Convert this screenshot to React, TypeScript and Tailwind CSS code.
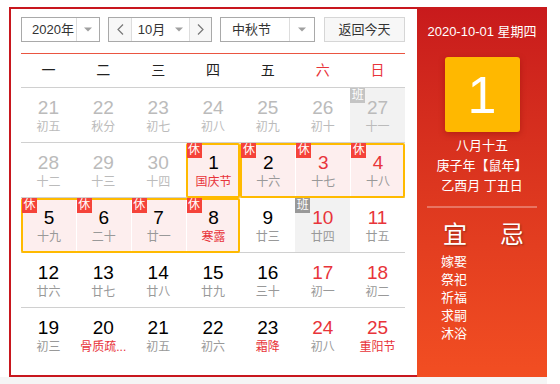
type Cell = {
  d: number
  l: string
  out?: boolean
  red?: boolean
  lred?: boolean
  tag?: '休' | '班'
  bg?: 'pink' | 'gray'
}

type Box = { col: number; span: number }

const colStart = ['col-start-1', 'col-start-2', 'col-start-3', 'col-start-4', 'col-start-5', 'col-start-6', 'col-start-7']
const colSpan = ['', 'col-span-1', 'col-span-2', 'col-span-3', 'col-span-4']

const weeks: { cells: Cell[]; boxes: Box[] }[] = [
  {
    cells: [
      { d: 21, l: '初五', out: true },
      { d: 22, l: '秋分', out: true },
      { d: 23, l: '初七', out: true },
      { d: 24, l: '初八', out: true },
      { d: 25, l: '初九', out: true },
      { d: 26, l: '初十', out: true },
      { d: 27, l: '十一', out: true, tag: '班', bg: 'gray' },
    ],
    boxes: [],
  },
  {
    cells: [
      { d: 28, l: '十二', out: true },
      { d: 29, l: '十三', out: true },
      { d: 30, l: '十四', out: true },
      { d: 1, l: '国庆节', lred: true, tag: '休', bg: 'pink' },
      { d: 2, l: '十六', tag: '休', bg: 'pink' },
      { d: 3, l: '十七', red: true, tag: '休', bg: 'pink' },
      { d: 4, l: '十八', red: true, tag: '休', bg: 'pink' },
    ],
    boxes: [
      { col: 3, span: 1 },
      { col: 4, span: 3 },
    ],
  },
  {
    cells: [
      { d: 5, l: '十九', tag: '休', bg: 'pink' },
      { d: 6, l: '二十', tag: '休', bg: 'pink' },
      { d: 7, l: '廿一', tag: '休', bg: 'pink' },
      { d: 8, l: '寒露', lred: true, tag: '休', bg: 'pink' },
      { d: 9, l: '廿三' },
      { d: 10, l: '廿四', red: true, tag: '班', bg: 'gray' },
      { d: 11, l: '廿五', red: true },
    ],
    boxes: [{ col: 0, span: 4 }],
  },
  {
    cells: [
      { d: 12, l: '廿六' },
      { d: 13, l: '廿七' },
      { d: 14, l: '廿八' },
      { d: 15, l: '廿九' },
      { d: 16, l: '三十' },
      { d: 17, l: '初一', red: true },
      { d: 18, l: '初二', red: true },
    ],
    boxes: [],
  },
  {
    cells: [
      { d: 19, l: '初三' },
      { d: 20, l: '骨质疏...', lred: true },
      { d: 21, l: '初五' },
      { d: 22, l: '初六' },
      { d: 23, l: '霜降', lred: true },
      { d: 24, l: '初八', red: true },
      { d: 25, l: '重阳节', red: true, lred: true },
    ],
    boxes: [],
  },
]

const weekdays = ['一', '二', '三', '四', '五', '六', '日']

function Caret() {
  return (
    <svg width="8" height="5" viewBox="0 0 8 5">
      <path d="M0 0.5h8L4 4.5z" fill="#a0a0a0" />
    </svg>
  )
}

function Chevron({ dir }: { dir: 'l' | 'r' }) {
  return (
    <svg width="7" height="11" viewBox="0 0 7 11">
      <polyline
        points={dir === 'l' ? '6,0.5 1,5.5 6,10.5' : '1,0.5 6,5.5 1,10.5'}
        fill="none"
        stroke="#777"
        strokeWidth="1.2"
      />
    </svg>
  )
}

function DayCell({ c, col }: { c: Cell; col: number }) {
  const bg =
    c.bg === 'pink' ? 'bg-[#fdeeee] border-l border-white' : c.bg === 'gray' ? 'bg-[#f2f2f2]' : ''
  const num = c.out ? 'text-[#bbbbbb]' : c.red ? 'text-[#e8343a]' : 'text-black'
  const lun = c.out ? 'text-[#bbbbbb]' : c.lred ? 'text-[#e8343a]' : 'text-[#999999]'
  const tagBg = c.tag === '休' ? 'bg-[#f5433a]' : c.out ? 'bg-[#c4c4c4]' : 'bg-[#999999]'
  return (
    <div className={`${colStart[col]} row-start-1 relative min-w-0 pt-[9px] text-center ${bg}`}>
      {c.tag && (
        <span
          className={`absolute left-0 top-0 z-10 w-[15px] h-[15px] text-[12px] leading-[15px] text-white text-center ${tagBg}`}
        >
          {c.tag}
        </span>
      )}
      <div className={`text-[19px] leading-[22px] ${num}`}>{c.d}</div>
      <div className={`text-[12px] leading-[16px] whitespace-nowrap overflow-hidden ${lun}`}>{c.l}</div>
    </div>
  )
}

export default function App() {
  return (
    <div className="w-[560px] h-[384px] bg-white font-['Liberation_Sans','Noto_Sans_CJK_SC',sans-serif] text-[#333]">
      <div className="pt-[7px] pl-[9px]">
        <div className="flex w-[538px] h-[370px]">
          {/* left: calendar */}
          <div className="w-[408px] h-full border-2 border-r-0 border-[#c8171e] pl-[10px] pr-[12px] pt-[8px]">
            <div className="flex h-[25px] text-[13px]">
              <div className="flex w-[79px] border border-[#a9a9a9]">
                <div className="flex-1 pl-[10px] leading-[23px]">2020年</div>
                <div className="w-[23px] border-l border-[#dddddd] flex items-center justify-center">
                  <Caret />
                </div>
              </div>
              <div className="flex w-[104px] ml-[8px] border border-[#a9a9a9]">
                <div className="w-[22px] bg-[#f7f7f7] flex items-center justify-center">
                  <Chevron dir="l" />
                </div>
                <div className="w-[59px] border-x border-[#dddddd] flex items-center justify-center gap-[10px] leading-[23px]">
                  <span>10月</span>
                  <Caret />
                </div>
                <div className="flex-1 bg-[#f7f7f7] flex items-center justify-center">
                  <Chevron dir="r" />
                </div>
              </div>
              <div className="flex w-[95px] ml-[8px] border border-[#a9a9a9]">
                <div className="flex-1 pl-[11px] leading-[23px]">中秋节</div>
                <div className="w-[25px] border-l border-[#dddddd] flex items-center justify-center">
                  <Caret />
                </div>
              </div>
              <div className="w-[81px] ml-[9px] border border-[#d6d6d6] bg-[#f7f7f7] text-center leading-[23px]">
                返回今天
              </div>
            </div>

            <div className="mt-[11px] h-px bg-[#ea5541]" />

            <div className="grid grid-cols-7 h-[34px] border-b border-[#d0d0d0] text-[14px] leading-[33px] text-center">
              {weekdays.map((w, i) => (
                <div key={w} className={i >= 5 ? 'text-[#e8343a]' : 'text-[#222]'}>
                  {w}
                </div>
              ))}
            </div>

            {weeks.map((wk, ri) => (
              <div
                key={ri}
                className={`grid grid-cols-7 ${ri < weeks.length - 1 ? 'h-[55px] border-b border-[#d0d0d0]' : 'h-[54px]'}`}
              >
                {wk.cells.map((c, ci) => (
                  <DayCell key={ci} c={c} col={ci} />
                ))}
                {wk.boxes.map((b, bi) => (
                  <div
                    key={'b' + bi}
                    className={`${colStart[b.col]} ${colSpan[b.span]} row-start-1 relative z-[5] -mb-px border-2 border-[#ffba00] rounded-[2px] pointer-events-none`}
                  />
                ))}
              </div>
            ))}
          </div>

          {/* right: today panel */}
          <div className="w-[130px] h-full bg-linear-to-b from-[#c81a1c] to-[#f24e22] text-white flex flex-col items-center pt-[17px]">
            <div className="text-[13px] leading-[16px]">2020-10-01 星期四</div>
            <div className="mt-[17px] w-[75px] h-[75px] rounded-[3px] bg-[#ffb800] shadow-[0_2px_6px_rgba(120,0,0,0.35)] flex items-center justify-center text-[52px] leading-none">
              1
            </div>
            <div className="mt-[4px] text-[13px] leading-[20px] text-center">
              <div>八月十五</div>
              <div>庚子年【鼠年】</div>
              <div>乙酉月 丁丑日</div>
            </div>
            <div className="mt-[10px] w-[110px] h-[2px] bg-white/30" />
            <div className="self-stretch flex pl-[26px] mt-[13px] text-[24px] leading-[28px] [text-shadow:1px_1px_2px_rgba(0,0,0,0.35)]">
              <span>宜</span>
              <span className="ml-[33px]">忌</span>
            </div>
            <div className="self-stretch pl-[24px] mt-[4px] text-[13px] leading-[18px]">
              <div>嫁娶</div>
              <div>祭祀</div>
              <div>祈福</div>
              <div>求嗣</div>
              <div>沐浴</div>
            </div>
          </div>
        </div>
      </div>
      <div className="h-[7px] w-[547px] bg-[#f5f5f5]" />
    </div>
  )
}
